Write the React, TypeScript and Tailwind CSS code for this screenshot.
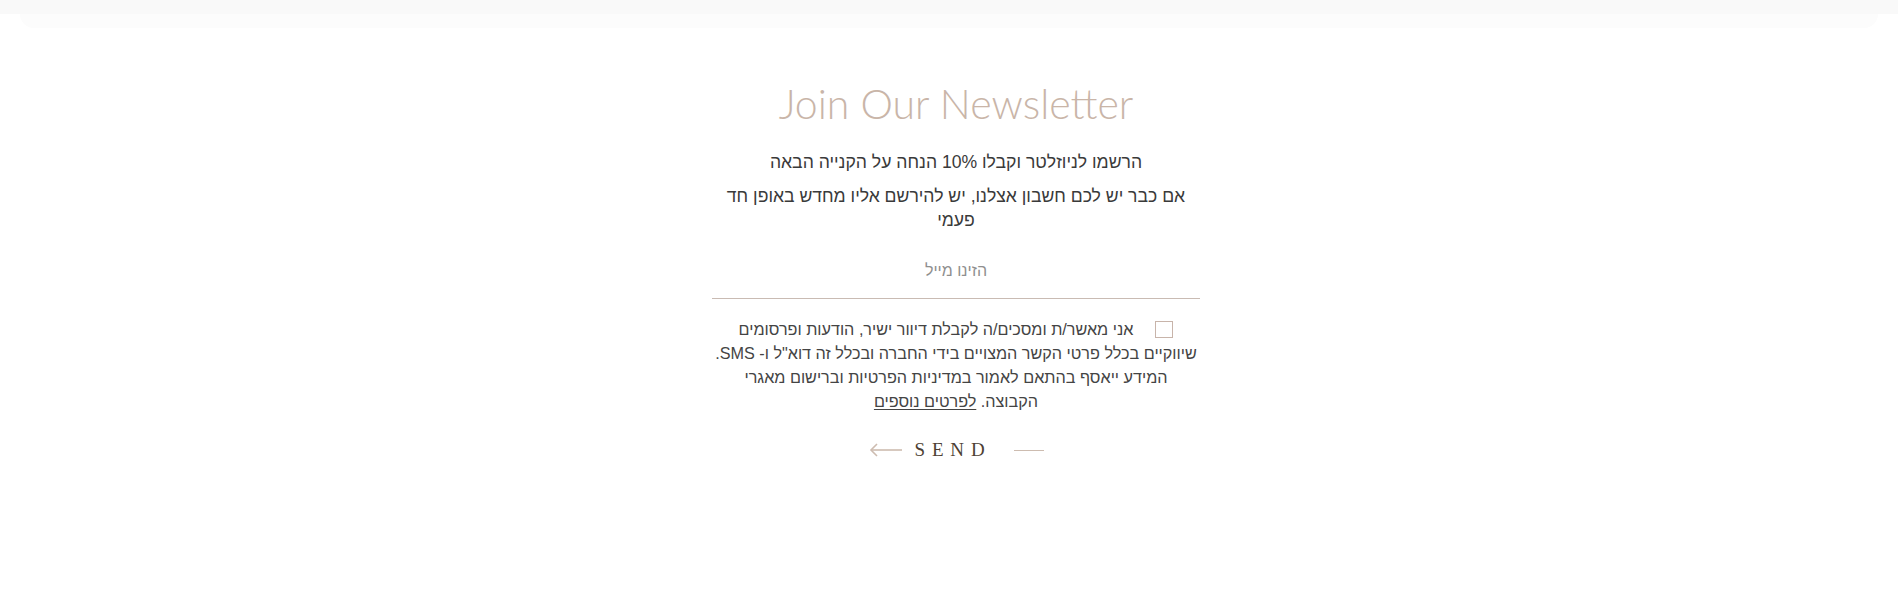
export default function App() {
  return (
    <div className="min-h-screen w-full bg-white overflow-hidden" dir="rtl">
      <div className="h-[14px] w-full bg-[#f9f9f9]" />
      <div className="mx-[20px] h-[14px] rounded-b-[60px] bg-[#fcfcfc]" />

      <div className="flex justify-center pl-[14px]">
        <div className="w-[488px] flex flex-col items-center text-center">
          <h2
            dir="ltr"
            className="mt-[52px] text-[41px] leading-[48px] font-light text-[#c9b5a8] font-['Lato','Liberation_Sans',sans-serif]"
          >
            Join Our Newsletter
          </h2>

          <div className="mt-[22px] text-[#3a3a3a] text-[17.6px] font-['Liberation_Sans','DejaVu_Sans',sans-serif]">
            <p className="leading-[24px]">הרשמו לניוזלטר וקבלו 10% הנחה על הקנייה הבאה</p>
            <p className="mt-[10px] leading-[24px]">
              אם כבר יש לכם חשבון אצלנו, יש להירשם אליו מחדש באופן חד
              <br />
              פעמי
            </p>
          </div>

          <div className="mt-[28px] w-full border-b border-[#c9bbb3] pb-[16px] text-[16px] leading-[22px] text-[#8f8f8f] font-['Liberation_Sans','DejaVu_Sans',sans-serif]">
            הזינו מייל
          </div>

          <label className="mt-[18px] block text-[16.2px] leading-[24px] text-[#444] font-['Liberation_Sans','DejaVu_Sans',sans-serif]">
            <span className="inline-block align-[-3px] ml-[22px] w-[18px] h-[17px] border border-[#c8b4aa] bg-white" />
            אני מאשר/ת ומסכים/ה לקבלת דיוור ישיר, הודעות ופרסומים
            <br />
            שיווקיים בכלל פרטי הקשר המצויים בידי החברה ובכלל זה דוא"ל ו- SMS.
            <br />
            המידע ייאסף בהתאם לאמור במדיניות הפרטיות וברישום מאגרי
            <br />
            הקבוצה. <span className="underline underline-offset-2">לפרטים נוספים</span>
          </label>

          <button className="mt-[23px] flex items-center gap-[12px]" dir="ltr">
            <svg width="34" height="14" viewBox="0 0 34 14" fill="none" stroke="#cdbcb0" strokeWidth="1.6">
              <path d="M33 7H2" />
              <path d="M8 1L2 7l6 6" />
            </svg>
            <span className="text-[19px] tracking-[0.36em] text-[#4e3f34] font-['Liberation_Serif',serif]">
              SEND
            </span>
            <span className="ml-[10px] h-[1.5px] w-[30px] bg-[#cdbcb0]" />
          </button>
        </div>
      </div>
    </div>
  );
}
